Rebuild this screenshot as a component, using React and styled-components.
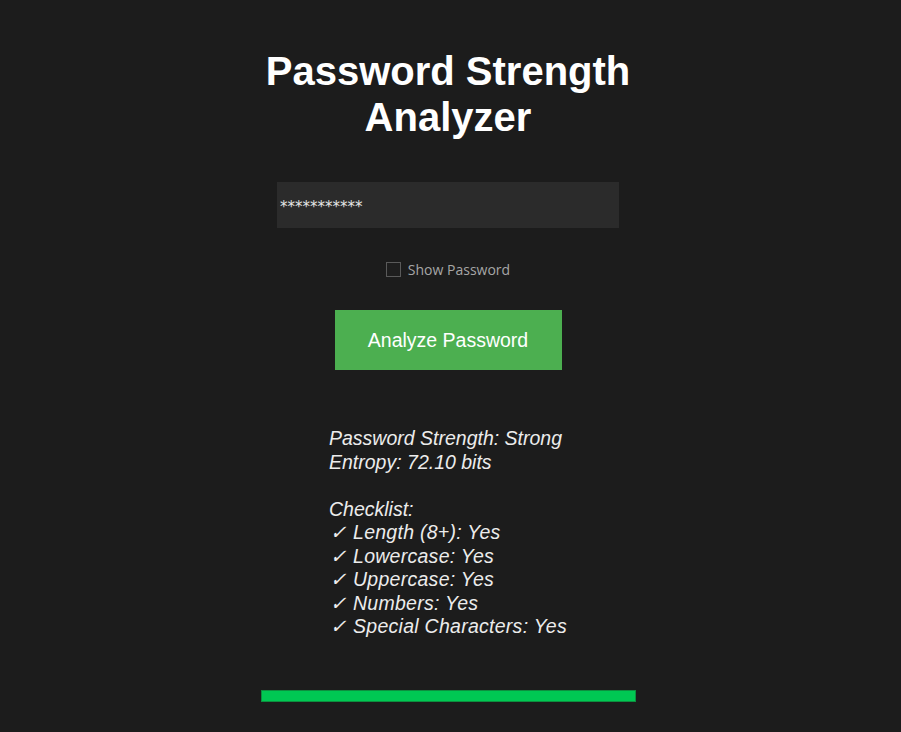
import React, { useState } from 'react'
import styled, { createGlobalStyle } from 'styled-components'

const GlobalStyle = createGlobalStyle`
  html, body {
    margin: 0;
    padding: 0;
    background-color: #1c1c1c;
  }
`

const Page = styled.div`
  width: 896px;
  min-height: 732px;
  display: flex;
  flex-direction: column;
  align-items: center;
  padding-top: 48px;
  box-sizing: border-box;
  font-family: 'Liberation Sans', Arial, sans-serif;
`

const Title = styled.h1`
  margin: 0;
  font-size: 40px;
  font-weight: bold;
  line-height: 46px;
  color: #ffffff;
  text-align: center;
`

const PasswordInput = styled.input`
  margin-top: 42px;
  width: 342px;
  height: 46px;
  box-sizing: border-box;
  border: none;
  outline: none;
  padding: 3px 3px 0;
  background-color: #2b2b2b;
  color: #e6e6e6;
  font-family: 'DejaVu Sans', sans-serif;
  font-size: 15px;
`

const CheckRow = styled.label`
  margin-top: 32px;
  display: flex;
  align-items: center;
  gap: 7px;
  cursor: pointer;
`

const Box = styled.span`
  width: 15px;
  height: 15px;
  box-sizing: border-box;
  border: 1px solid #5a5a5a;
  background-color: #1e1e1e;
`

const CheckLabel = styled.span`
  font-family: 'Open Sans', sans-serif;
  font-size: 14px;
  color: #a6a6a6;
`

const AnalyzeButton = styled.button`
  margin-top: 31px;
  width: 227px;
  height: 60px;
  border: none;
  background-color: #4caf50;
  color: #ffffff;
  font-family: 'Liberation Sans', Arial, sans-serif;
  font-size: 19.5px;
  cursor: pointer;
`

const Results = styled.div`
  margin-top: 57px;
  font-style: italic;
  font-size: 19.5px;
  line-height: 23.5px;
  color: #ececec;
  text-align: left;
`

const Line = styled.div`
  min-height: 23.5px;
  letter-spacing: ${props => (props.$check ? '0.27px' : '0')};
`

const Tick = styled.span`
  display: inline-block;
  width: 24px;
  padding-left: 1px;
  box-sizing: border-box;
`

const StrengthBar = styled.div`
  margin-top: 51px;
  width: 375px;
  height: 12px;
  box-sizing: border-box;
  background-color: #00c853;
  border: 1px solid #0d8f3f;
`

const checks = ['Length (8+)', 'Lowercase', 'Uppercase', 'Numbers', 'Special Characters']

const App = () => {
  const [show, setShow] = useState(false)
  return (
    <Page>
      <GlobalStyle />
      <Title>
        Password Strength
        <br />
        Analyzer
      </Title>
      <PasswordInput type="text" readOnly value="***********" />
      <CheckRow onClick={() => setShow(!show)}>
        <Box />
        <CheckLabel>Show Password</CheckLabel>
      </CheckRow>
      <AnalyzeButton>Analyze Password</AnalyzeButton>
      <Results>
        <Line>Password Strength: Strong</Line>
        <Line>Entropy: 72.10 bits</Line>
        <Line />
        <Line>Checklist:</Line>
        {checks.map(c => (
          <Line key={c} $check>
            <Tick>✓</Tick>
            {c}: Yes
          </Line>
        ))}
      </Results>
      <StrengthBar />
    </Page>
  )
}

export default App
